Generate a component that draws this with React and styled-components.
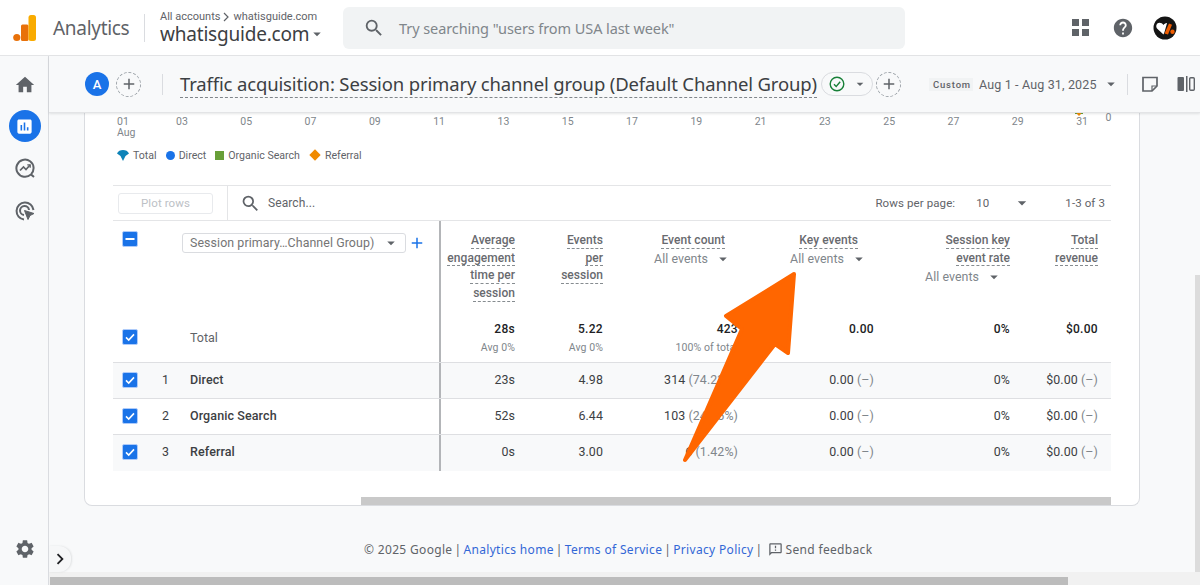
import React from "react";
import styled, { createGlobalStyle } from "styled-components";
import { MdHome, MdHelp, MdSettings, MdSearch, MdAssessment, MdChevronRight, MdArrowDropDown, MdAdd, MdOutlineFeedback } from "react-icons/md";

const Global = createGlobalStyle`
  html, body { margin: 0; padding: 0; height: 100%; overflow: hidden; background: #f8f9fa; }
  * { box-sizing: border-box; }
  body { font-family: Roboto, "Liberation Sans", sans-serif; color: #5f6368; }
`;

const Page = styled.div`
  position: relative; width: 1200px; height: 585px; overflow: hidden;
  display: flex; flex-direction: column; background: #f8f9fa;
`;

/* ---- top bar ---- */
const TopBar = styled.header`
  height: 56px; flex: none; background: #fff; border-bottom: 1px solid #e4e5e7;
  display: flex; align-items: center; padding-left: 13px;
`;
const Brand = styled.div`
  font: 400 19px "Noto Sans", sans-serif; color: #5f6368; margin-left: 16px; width: 91px; letter-spacing: -0.3px;
`;
const VDivider = styled.span`
  width: 1px; height: ${p => p.$h || 28}px; background: #dadce0; flex: none; margin-left: ${p => p.$ml || 0}px;
`;
const Account = styled.div`
  margin-left: 15px; width: 183px; display: flex; flex-direction: column; margin-top: -1px;
`;
const Crumb = styled.div`
  font-size: 11px; line-height: 14px; color: #5f6368; display: flex; align-items: center; gap: 2px;
`;
const AccountName = styled.div`
  font: 400 19px/20px "Noto Sans", sans-serif; color: #3c4043; display: flex; align-items: center; letter-spacing: -0.2px;
  svg { margin-left: -1px; }
`;
const SearchBox = styled.div`
  width: 562px; height: 42px; background: #f1f3f4; border-radius: 6px; display: flex; align-items: center;
  padding-left: 20px; gap: 14px; color: #5f6368; font: 400 14.5px "Noto Sans", sans-serif;
  span { color: #80868b; letter-spacing: -0.08px; }
`;
const TopIcons = styled.div`
  margin-left: auto; display: flex; align-items: center; color: #5f6368; padding-right: 23px; gap: 20px;
`;
const Apps = styled.div`
  display: grid; grid-template-columns: 7px 7px; gap: 3px;
  i { width: 7px; height: 7px; background: #5f6368; display: block; }
`;
const HelpIcon = styled(MdHelp)`
  margin: 0 -1px 0 3px;
`;

/* ---- body ---- */
const Body = styled.div`
  flex: 1; display: flex; min-height: 0;
`;
const Side = styled.nav`
  width: 49px; flex: none; border-right: 1px solid #dadce0; background: #f8f9fa;
  display: flex; flex-direction: column; align-items: center; padding: 13px 0 25px 1px;
`;
const SideBtn = styled.div`
  width: 32px; height: 32px; border-radius: 50%; display: flex; align-items: center; justify-content: center;
  margin-bottom: ${p => p.$mb ?? 10}px;
  background: ${p => (p.$active ? "#1a73e8" : "transparent")}; color: ${p => (p.$active ? "#fff" : "#5f6368")};
`;
const SideBottom = styled.div`
  margin-top: auto; color: #5f6368; display: flex;
`;
const Main = styled.div`
  flex: 1; display: flex; flex-direction: column; min-width: 0; position: relative;
`;
const SubHeader = styled.div`
  height: 57px; flex: none; display: flex; align-items: center; background: #f8f9fa; padding-left: 36px;
  border-bottom: 1px solid #e3e4e6; box-shadow: 0 1px 2px rgba(60,64,67,.12); position: relative; z-index: 2;
`;
const Avatar = styled.div`
  width: 24px; height: 24px; border-radius: 50%; background: #1a73e8; color: #fff; font: 500 13px Roboto, sans-serif;
  display: flex; align-items: center; justify-content: center; flex: none;
`;
const AddCircle = styled.div`
  width: 25px; height: 25px; border-radius: 50%; border: 1px dashed #9aa0a6; color: #5f6368;
  display: flex; align-items: center; justify-content: center; flex: none; margin-left: ${p => p.$ml}px;
`;
const Title = styled.h1`
  margin: 2px 0 0 17px; font: 400 18.5px/24px "Noto Sans", sans-serif; color: #3c4043; white-space: nowrap;
  border-bottom: 1px dashed #80868b; padding-bottom: 1px; letter-spacing: -0.15px; width: 637px;
`;
const StatusPill = styled.div`
  margin-left: 4px; width: 52px; height: 24px; border: 1px solid #dadce0; border-radius: 12px; display: flex; align-items: center;
  padding-left: 7px; gap: 7px; flex: none;
`;
const CustomChip = styled.div`
  margin-left: 28px; background: #f1f3f4; font-size: 9.5px; font-weight: 500; letter-spacing: .8px; color: #5f6368;
  padding: 0 4px; height: 13px; line-height: 13px; width: 44px; flex: none;
`;
const DateText = styled.div`
  margin-left: 6px; font: 400 12.5px Roboto, sans-serif; color: #5f6368; width: 119px; white-space: nowrap; letter-spacing: .15px;
`;
const Tools = styled.div`
  display: flex; align-items: center; margin-left: 4px; color: #5f6368;
`;
const ToolIcon = styled.svg`
  margin-left: ${p => p.$ml}px;
`;

const Scroller = styled.div`
  flex: 1; min-height: 0; display: flex;
`;
const Content = styled.div`
  flex: 1; display: flex; flex-direction: column; padding-left: 35px; min-width: 0;
`;
const VTrack = styled.div`
  width: 5px; flex: none; padding-top: 162px; display: flex;
  i { flex: 1; background: #dcdcdc; display: block; }
`;
const Card = styled.section`
  width: 1056px; height: 393px; background: #fff; border: 1px solid #dadce0; border-top: 0; flex: none;
  border-radius: 0 0 8px 8px; padding: 0 28px; display: flex; flex-direction: column; position: relative;
`;
const Axis = styled.div`
  display: flex; flex: none; padding-left: 4px; height: 26px; position: relative; font-size: 10.5px; line-height: 11px; color: #80868b; padding-top: 3px;
`;
const Tick = styled.div`
  width: ${p => p.$w}px; flex: none;
`;
const AxisZero = styled.div`
  margin-left: -35px; margin-top: -4px;
`;
const PeekMark = styled.svg`
  position: absolute; left: 962px; top: 0;
`;
const Legend = styled.div`
  display: flex; flex: none; align-items: center; padding-left: 4px; height: 14px; margin-top: 9px; font-size: 10.6px; color: #5f6368;
`;
const LegendItem = styled.div`
  display: flex; align-items: center; gap: 4px; margin-right: 9px;
`;
const Dot = styled.i`
  display: block; width: 9px; height: 9px; background: ${p => p.$c}; border-radius: ${p => (p.$round ? "50%" : 0)};
`;
const Diamond = styled.i`
  display: block; width: 8px; height: 8px; margin: 0 2px; background: #f08a00; transform: rotate(45deg);
`;
const Toolbar = styled.div`
  margin-top: 23px; height: 36px; flex: none; display: flex; align-items: center; border-top: 1px solid #e4e5e7; border-bottom: 1px solid #e4e5e7;
  font-size: 11.5px; color: #5f6368; letter-spacing: .1px;
`;
const PlotBtn = styled.div`
  margin-left: 5px; width: 95px; height: 21px; border: 1px solid #e8eaed; border-radius: 3px; color: #bdc1c6;
  display: flex; align-items: center; justify-content: center; font-size: 11.5px; flex: none;
`;
const ToolDiv = styled.span`
  width: 1px; align-self: stretch; background: #e4e5e7; margin: 0 12px 0 14px; flex: none;
`;
const SearchLabel = styled.div`
  margin-left: 7px; flex: 1; font-size: 12px; color: #5f6368;
`;
const Pager = styled.div`
  display: flex; align-items: center; padding-right: 6px;
`;
const PagerItem = styled.span`
  margin-left: ${p => p.$ml}px; display: flex;
`;
const Row = styled.div`
  display: flex; flex: none; height: ${p => p.$h}px; background: ${p => (p.$shade ? "#f8f9fa" : "#fff")};
  border-bottom: ${p => (p.$last ? "0" : "1px solid #dedfe2")};
`;
const Left = styled.div`
  width: 328px; flex: none; border-right: 2px solid #b3b5b8; display: flex; position: relative; padding-left: 9px;
  padding-bottom: ${p => p.$pb || 0}px;
  align-items: ${p => (p.$top ? "flex-start" : "center")};
`;
const Check = styled.div`
  width: 16px; height: 16px; border-radius: 2px; background: #1a73e8; color: #fff; display: flex; align-items: center; justify-content: center; flex: none;
  border: 1px solid #aecbfa; margin-bottom: ${p => p.$mb || 0}px; margin-top: ${p => p.$mt || 0}px;
`;
const RowIndex = styled.div`
  width: 19px; margin-left: 24px; font-size: 12.4px; color: #3c4043;
`;
const RowName = styled.div`
  margin-left: 9px; font-size: 12.5px; font-weight: 500; color: #3c4043; letter-spacing: .1px;
`;
const TotalName = styled.div`
  font-size: 12.5px; color: #5f6368; margin: 0 0 2px 52px;
`;
const DimSelect = styled.div`
  width: 224px; height: 20px; margin-left: 44px; margin-top: 12px; border: 1px solid #dadce0; border-radius: 3px; display: flex; align-items: center;
  padding: 0 5px 1px 7px; font-size: 12.4px; color: #757575; flex: none; justify-content: space-between; letter-spacing: .08px;
`;
const AddDim = styled(MdAdd)`
  margin-left: 2px; margin-top: 13px; color: #1a73e8;
`;
const Metric = styled.div`
  width: ${p => p.$w}px; flex: none; display: flex; flex-direction: column; align-items: flex-end; justify-content: center; font-size: 12.4px; color: #3c4043;
  white-space: nowrap; letter-spacing: .1px; padding-bottom: ${p => p.$pb || 0}px;
`;
const Gray = styled.span`
  color: #80868b;
`;
const HeadMetric = styled.div`
  width: ${p => p.$w}px; flex: none; display: flex; flex-direction: column; align-items: flex-end; padding-top: 10px; padding-right: ${p => p.$pr || 0}px; letter-spacing: .05px;
`;
const HeadLine = styled.div`
  font-size: 12px; font-weight: 500; line-height: 16px; height: 17.67px; color: #5f6368; border-bottom: 1px dashed #80868b; white-space: nowrap; padding-top: 1px; opacity: .95;
`;
const EventPick = styled.div`
  display: flex; align-items: center; gap: 6px; font-size: 12.4px; line-height: 18px; color: #80868b; white-space: nowrap; margin-top: 1.5px; margin-right: ${p => p.$mr ?? -7}px;
`;
const TotalNum = styled.div`
  font-size: 12px; font-weight: 500; color: #202124; line-height: 18px; letter-spacing: .3px;
`;
const TotalSub = styled.div`
  font-size: 10.5px; color: #80868b; line-height: 18px; margin-top: 1px; height: 18px;
`;
const HeadBlock = styled.div`
  height: 97px; display: flex; flex: none;
`;
const TotalBlock = styled.div`
  display: flex; height: 45px; flex: none; border-bottom: 1px solid #dedfe2;
`;
const HScroll = styled.div`
  margin-top: 26px; height: 8px; margin-left: 248px; width: 750px; background: #c9c9c9; flex: none;
`;
const Footer = styled.footer`
  margin-top: 35px; display: flex; align-items: center; padding-left: 280px; font: 400 12px "Noto Sans", sans-serif; color: #5f6368; height: 16px; white-space: nowrap; letter-spacing: .33px;
  a { color: #3367d6; text-decoration: none; }
  span { margin: 0 2px; }
`;
const Feedback = styled.div`
  display: flex; align-items: center; gap: 3px; margin-left: 3px;
`;
const BottomTrack = styled.div`
  height: 13px; flex: none; background: #f1f1f1; padding-top: 5px;
  i { display: block; height: 8px; width: 1018px; margin-left: 1px; background: #bcbcbc; }
`;
const Expand = styled.div`
  position: absolute; left: 0; bottom: 13px; width: 22px; height: 26px; background: #f6f7f8; border-radius: 0 12px 12px 0;
  display: flex; align-items: center; justify-content: center; color: #202124; box-shadow: 1px 0 2px rgba(60,64,67,.12);
`;
const ArrowLayer = styled.svg`
  position: absolute; left: 0; top: 0; pointer-events: none; z-index: 5;
`;

const CheckMark = () => (
  <svg width="12" height="12" viewBox="0 0 12 12"><path d="M2 6.4 4.7 9 10 3.4" fill="none" stroke="#fff" strokeWidth="1.6" /></svg>
);
const Caret = ({ c = "#5f6368", s = 18 }) => <MdArrowDropDown size={s} color={c} />;

const days = ["03","05","07","09","11","13","15","17","19","21","23","25","27","29","31"];

const rows = [
  { i: 1, n: "Direct", t: "23s", e: "4.98", c: <>314 <Gray>(74.23%)</Gray></> },
  { i: 2, n: "Organic Search", t: "52s", e: "6.44", c: <>103 <Gray>(24.35%)</Gray></> },
  { i: 3, n: "Referral", t: "0s", e: "3.00", c: <>6 <Gray>(1.42%)</Gray></> },
];
const widths = [74, 88, 135, 136, 136, 88];

export default function App() {
  return (
    <Page>
      <Global />
      <TopBar>
        <svg width="24" height="28" viewBox="0 0 24 28">
          <circle cx="3.8" cy="23.5" r="3.6" fill="#e8710a" />
          <rect x="8" y="10.5" width="7.5" height="16.5" rx="1.5" fill="#e8710a" />
          <rect x="15.5" y="1" width="7.5" height="26" rx="2.5" fill="#f9ab00" />
        </svg>
        <Brand>Analytics</Brand>
        <VDivider />
        <Account>
          <Crumb>All accounts
            <svg width="9" height="10" viewBox="0 0 9 10"><path d="M2 1l4 4-4 4" fill="none" stroke="#5f6368" strokeWidth="1.2" /></svg>
            whatisguide.com</Crumb>
          <AccountName>whatisguide.com<Caret /></AccountName>
        </Account>
        <SearchBox><MdSearch size={22} /><span>Try searching "users from USA last week"</span></SearchBox>
        <TopIcons>
          <Apps><i /><i /><i /><i /></Apps>
          <HelpIcon size={22} />
          <svg width="24" height="24" viewBox="0 0 24 24">
            <circle cx="12" cy="12" r="11.5" fill="#141414" />
            <path d="M10.5 18.5 4 12.5C2.4 10.4 3.6 6.8 6.5 6.8c1.6 0 3 .9 3.9 2.2.8-1.2 2-2 3.2-2.1l.4.3L11.5 16z" fill="#fff" />
            <path d="M11.5 17.5 16 7.5l3 1.3L15 18.5z" fill="#ef5c00" />
            <circle cx="19.5" cy="15.8" r="2.2" fill="#ef5c00" />
          </svg>
        </TopIcons>
      </TopBar>
      <Body>
        <Side>
          <SideBtn $mb={9}><MdHome size={22} /></SideBtn>
          <SideBtn $active $mb={10}><MdAssessment size={19} /></SideBtn>
          <SideBtn $mb={11}>
            <svg width="20" height="20" viewBox="0 0 20 20" fill="none" stroke="#5f6368" strokeWidth="2">
              <path d="M19 19l-3-2.6A8.6 8.6 0 1 1 18.6 10c0 2.5-1 4.8-2.6 6.4" />
              <path d="M5 12.5 8.5 9l2.5 2.5L15 7" strokeWidth="1.7" />
              <path d="M12.3 6.8H15.2V9.7" strokeWidth="1.3" />
            </svg>
          </SideBtn>
          <SideBtn>
            <svg width="22" height="22" viewBox="0 0 22 22" fill="none" stroke="#5f6368" strokeWidth="2">
              <path d="M10 19.5A8.5 8.5 0 1 1 19.5 10" />
              <path d="M10 15a4.5 4.5 0 1 1 5-5" />
              <path d="M10.5 10.5 20 13.5l-4 2-2 4z" fill="#5f6368" strokeWidth="1" />
            </svg>
          </SideBtn>
          <SideBottom><MdSettings size={22} /></SideBottom>
        </Side>
        <Main>
          <SubHeader>
            <Avatar>A</Avatar>
            <AddCircle $ml={7}><MdAdd size={18} /></AddCircle>
            <VDivider $h={21} $ml={21} />
            <Title>Traffic acquisition: Session primary channel group (Default Channel Group)</Title>
            <StatusPill>
              <svg width="16" height="16" viewBox="0 0 16 16" fill="none">
                <circle cx="8" cy="8" r="6.8" stroke="#188038" strokeWidth="1.4" />
                <path d="M5 8.2 7.2 10.4 11.2 5.8" stroke="#188038" strokeWidth="1.4" />
              </svg>
              <Caret s={16} />
            </StatusPill>
            <AddCircle $ml={3}><MdAdd size={18} /></AddCircle>
            <CustomChip>Custom</CustomChip>
            <DateText>Aug 1 - Aug 31, 2025</DateText>
            <Tools>
              <Caret s={18} />
              <VDivider $h={21} $ml={7} />
              <ToolIcon $ml={13} width="18" height="18" viewBox="0 0 18 18" fill="none" stroke="#5f6368" strokeWidth="1.7">
                <path d="M2 2.5h14v8.5L11 16H2z" /><path d="M16 11h-5v5" strokeWidth="1.2" />
              </ToolIcon>
              <ToolIcon $ml={18} width="18" height="18" viewBox="0 0 18 18">
                <rect x="0.5" y="2" width="6.5" height="14" rx="1" fill="#5f6368" />
                <rect x="9" y="1" width="1.5" height="16" fill="#5f6368" />
                <rect x="12.7" y="2.7" width="4.6" height="12.6" rx="1" fill="none" stroke="#5f6368" strokeWidth="1.4" />
              </ToolIcon>
            </Tools>
          </SubHeader>
          <Scroller>
            <Content>
              <Card>
                <Axis>
                  <Tick $w={59}>01<br />Aug</Tick>
                  {days.map(d => <Tick key={d} $w={64.3}>{d}</Tick>)}
                  <AxisZero>0</AxisZero>
                  <PeekMark width="8" height="3" viewBox="0 0 8 3"><path d="M1 0h6L4 3z" fill="#f08a00" /><path d="M0 0h2v1H0zM6 0h2v1H6z" fill="#689f38" /></PeekMark>
                </Axis>
                <Legend>
                  <LegendItem>
                    <svg width="12" height="11" viewBox="0 0 12 11"><path d="M0 3.5C1 1 3.5 0 6 0s5 1 6 3.5L8.5 6 6 11 3.5 6z" fill="#0d83b8" /></svg>
                    Total
                  </LegendItem>
                  <LegendItem><Dot $c="#1a73e8" $round />Direct</LegendItem>
                  <LegendItem><Dot $c="#689f38" />Organic Search</LegendItem>
                  <LegendItem><Diamond />Referral</LegendItem>
                </Legend>
                <Toolbar>
                  <PlotBtn>Plot rows</PlotBtn>
                  <ToolDiv />
                  <MdSearch size={21} />
                  <SearchLabel>Search...</SearchLabel>
                  <Pager>
                    Rows per page:
                    <PagerItem $ml={21}>10</PagerItem>
                    <PagerItem $ml={23}><Caret s={20} /></PagerItem>
                    <PagerItem $ml={33}>1-3 of 3</PagerItem>
                  </Pager>
                </Toolbar>
                <HeadBlock>
                  <Left $top>
                    <Check $mt={10}>
                      <svg width="12" height="12" viewBox="0 0 12 12"><rect x="1.5" y="5" width="9" height="2" fill="#fff" /></svg>
                    </Check>
                    <DimSelect>Session primary…Channel Group)<Caret s={18} /></DimSelect>
                    <AddDim size={18} />
                  </Left>
                  <HeadMetric $w={widths[0]}><HeadLine>Average</HeadLine><HeadLine>engagement</HeadLine><HeadLine>time per</HeadLine><HeadLine>session</HeadLine></HeadMetric>
                  <HeadMetric $w={widths[1]}><HeadLine>Events</HeadLine><HeadLine>per</HeadLine><HeadLine>session</HeadLine></HeadMetric>
                  <HeadMetric $w={widths[2]} $pr={13}><HeadLine>Event count</HeadLine><EventPick>All events<Caret s={18} /></EventPick></HeadMetric>
                  <HeadMetric $w={widths[3]} $pr={16}><HeadLine>Key events</HeadLine><EventPick $mr={-10}>All events<Caret s={18} /></EventPick></HeadMetric>
                  <HeadMetric $w={widths[4]}><HeadLine>Session key</HeadLine><HeadLine>event rate</HeadLine><EventPick $mr={7}>All events<Caret s={18} /></EventPick></HeadMetric>
                  <HeadMetric $w={widths[5]}><HeadLine>Total</HeadLine><HeadLine>revenue</HeadLine></HeadMetric>
                </HeadBlock>
                <TotalBlock>
                  <Left $pb={4}>
                    <Check $mb={2}><CheckMark /></Check>
                    <TotalName>Total</TotalName>
                  </Left>
                  <Metric $pb={4} $w={widths[0]}><TotalNum>28s</TotalNum><TotalSub>Avg 0%</TotalSub></Metric>
                  <Metric $pb={4} $w={widths[1]}><TotalNum>5.22</TotalNum><TotalSub>Avg 0%</TotalSub></Metric>
                  <Metric $pb={4} $w={widths[2]}><TotalNum>423</TotalNum><TotalSub>100% of total</TotalSub></Metric>
                  <Metric $pb={4} $w={widths[3]}><TotalNum>0.00</TotalNum><TotalSub /></Metric>
                  <Metric $pb={4} $w={widths[4]}><TotalNum>0%</TotalNum><TotalSub /></Metric>
                  <Metric $pb={4} $w={widths[5]}><TotalNum>$0.00</TotalNum><TotalSub /></Metric>
                </TotalBlock>
                {rows.map((r, k) => {
                  const pb = k === 2 ? 3 : 2;
                  return (
                    <Row key={r.i} $h={36} $shade={k !== 1} $last={k === 2}>
                      <Left $pb={pb}>
                        <Check><CheckMark /></Check>
                        <RowIndex>{r.i}</RowIndex>
                        <RowName>{r.n}</RowName>
                      </Left>
                      <Metric $pb={pb} $w={widths[0]}>{r.t}</Metric>
                      <Metric $pb={pb} $w={widths[1]}>{r.e}</Metric>
                      <Metric $pb={pb} $w={widths[2]}><div>{r.c}</div></Metric>
                      <Metric $pb={pb} $w={widths[3]}><div>0.00 <Gray>(–)</Gray></div></Metric>
                      <Metric $pb={pb} $w={widths[4]}>0%</Metric>
                      <Metric $pb={pb} $w={widths[5]}><div>$0.00 <Gray>(–)</Gray></div></Metric>
                    </Row>
                  );
                })}
                <HScroll />
              </Card>
              <Footer>
                © 2025 Google<span>|</span><a>Analytics home</a><span>|</span><a>Terms of Service</a><span>|</span><a>Privacy Policy</a><span>|</span>
                <Feedback><MdOutlineFeedback size={15} />Send feedback</Feedback>
              </Footer>
            </Content>
            <VTrack><i /></VTrack>
          </Scroller>
          <BottomTrack><i /></BottomTrack>
          <Expand><MdChevronRight size={22} /></Expand>
        </Main>
      </Body>
      <ArrowLayer width="1200" height="585" viewBox="0 0 1200 585">
        <polygon points="794,274 726,316 742,329 685,460 775,344 788,353" fill="#ff6600" stroke="#ff6600" strokeWidth="4" strokeLinejoin="round" />
      </ArrowLayer>
    </Page>
  );
}
